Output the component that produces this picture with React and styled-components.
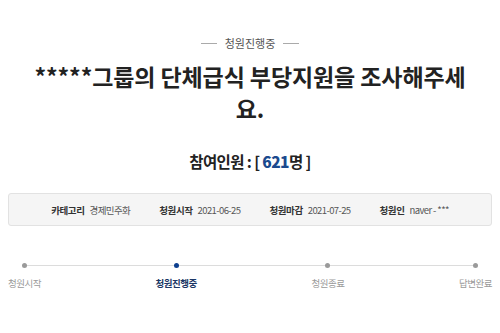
import React from "react";
import styled, { createGlobalStyle } from "styled-components";

const GlobalStyle = createGlobalStyle`
    html, body {
        margin: 0;
        padding: 0;
        background: #ffffff;
        font-family: "Noto Sans CJK KR", "Noto Sans", sans-serif;
    }
`;

const steps = [
    { name: "청원시작" },
    { name: "청원진행중", active: true },
    { name: "청원종료" },
    { name: "답변완료" },
];

const info = [
    { label: "카테고리", value: "경제민주화" },
    { label: "청원시작", value: "2021-06-25" },
    { label: "청원마감", value: "2021-07-25" },
    { label: "청원인", value: "naver - ***" },
];

const App = () => {
    return (
        <>
            <GlobalStyle />
            <Page>
                <Status>청원진행중</Status>
                <Title>*****그룹의 단체급식 부당지원을 조사해주세요.</Title>
                <Count>
                    참여인원 : [ <strong>621</strong>명 ]
                </Count>
                <InfoBox>
                    {info.map((item) => (
                        <InfoItem key={item.label}>
                            <b>{item.label}</b>
                            <span>{item.value}</span>
                        </InfoItem>
                    ))}
                </InfoBox>
                <Progress>
                    {steps.map((step) => (
                        <Step key={step.name}>
                            <Dot active={step.active} />
                            <StepName active={step.active}>{step.name}</StepName>
                        </Step>
                    ))}
                </Progress>
            </Page>
        </>
    );
};

const Page = styled.div`
    width: 500px;
    height: 333px;
    box-sizing: border-box;
    padding: 35px 8px 0;
    display: flex;
    flex-direction: column;
    overflow: hidden;
`;

const Status = styled.div`
    display: flex;
    align-items: center;
    justify-content: center;
    gap: 8px;
    font-size: 11px;
    line-height: 16px;
    color: #555;

    &::before,
    &::after {
        content: "";
        width: 16px;
        height: 1px;
        background: #aaa;
    }
`;

const Title = styled.h1`
    margin: 9px auto 0;
    max-width: 440px;
    font-size: 23px;
    line-height: 32px;
    font-weight: 700;
    color: #222;
    text-align: center;
    letter-spacing: -0.1px;
`;

const Count = styled.div`
    margin-top: 25px;
    text-align: center;
    font-size: 15.5px;
    line-height: 24px;
    font-weight: 700;
    color: #222;
    letter-spacing: -0.6px;

    strong {
        color: #1b4a8e;
    }
`;

const InfoBox = styled.div`
    margin-top: 20px;
    height: 33px;
    box-sizing: border-box;
    border: 1px solid #e2e2e2;
    border-radius: 3px;
    background: #f5f5f5;
    display: flex;
    align-items: center;
    justify-content: center;
    gap: 29px;
`;

const InfoItem = styled.div`
    display: flex;
    align-items: center;
    gap: 5px;
    font-size: 9.5px;
    line-height: 14px;

    b {
        color: #333;
        font-weight: 700;
        letter-spacing: -0.4px;
    }
    span {
        color: #555;
        letter-spacing: -0.6px;
    }
`;

const Progress = styled.div`
    position: relative;
    margin-top: 37px;
    display: flex;
    justify-content: space-between;

    &::before {
        content: "";
        position: absolute;
        top: 2px;
        left: 16px;
        right: 16px;
        height: 1px;
        background: #dcdcdc;
    }
`;

const Step = styled.div`
    position: relative;
    display: flex;
    flex-direction: column;
    align-items: center;
`;

const Dot = styled.span`
    width: 5px;
    height: 5px;
    border-radius: 50%;
    background: ${(p) => (p.active ? "#0d3f8f" : "#9a9a9a")};
`;

const StepName = styled.span`
    margin-top: 8px;
    font-size: 9.5px;
    line-height: 14px;
    letter-spacing: -0.5px;
    color: ${(p) => (p.active ? "#1c3766" : "#9a9a9a")};
    font-weight: ${(p) => (p.active ? 700 : 400)};
`;

export default App;
